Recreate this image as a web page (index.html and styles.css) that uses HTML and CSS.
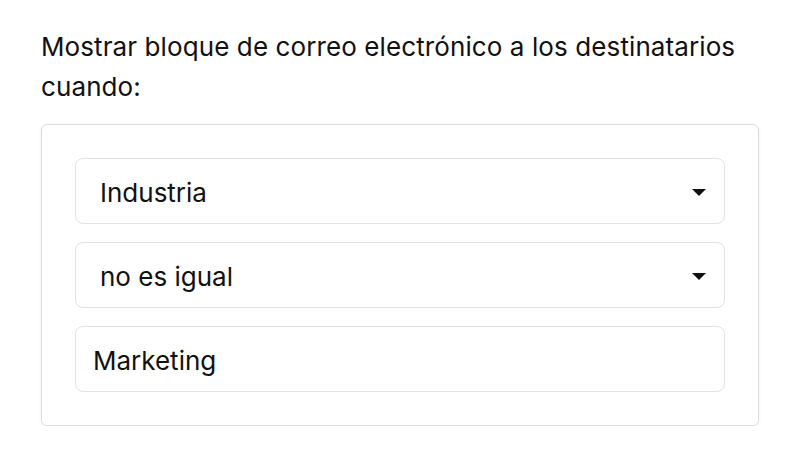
FILE: index.html
```html
<!DOCTYPE html>
<html lang="es">
<head>
<meta charset="utf-8">
<link rel="stylesheet" href="styles.css">
</head>
<body>
<div class="page">
  <p class="label">Mostrar bloque de correo electrónico a los destinatarios cuando:</p>
  <div class="card">
    <div class="field select">
      <span class="value">Industria</span>
      <svg class="caret" width="14" height="7" viewBox="0 0 14 7"><path d="M0 0H14L7 7Z" fill="#111"/></svg>
    </div>
    <div class="field select">
      <span class="value">no es igual</span>
      <svg class="caret" width="14" height="7" viewBox="0 0 14 7"><path d="M0 0H14L7 7Z" fill="#111"/></svg>
    </div>
    <div class="field input">
      <span class="value">Marketing</span>
    </div>
  </div>
</div>
</body>
</html>
```
FILE: styles.css
```css
* { box-sizing: border-box; }
html, body { margin: 0; padding: 0; background: #fff; }
body { font-family: Inter, "Noto Sans", sans-serif; color: #111; }
.page { padding: 27px 41px 0 41px; }
.label {
  margin: 0 0 17px 0;
  font-size: 26px;
  line-height: 40px;
  letter-spacing: 0.1px;
  max-width: 718px;
}
.card {
  width: 718px;
  border: 1px solid #dcdcdc;
  border-radius: 6px;
  padding: 33px;
  display: flex;
  flex-direction: column;
  gap: 18px;
  box-shadow: 0 2px 4px rgba(0,0,0,0.06);
}
.field {
  height: 66px;
  border: 1px solid #e3e3e3;
  border-radius: 8px;
  display: flex;
  align-items: center;
  font-size: 26px;
  padding-top: 3px;
}
.select { padding-left: 24px; padding-right: 18px; justify-content: space-between; }
.input { padding-left: 17px; padding-right: 17px; }
.caret { display: block; margin-top: 0; }
```
